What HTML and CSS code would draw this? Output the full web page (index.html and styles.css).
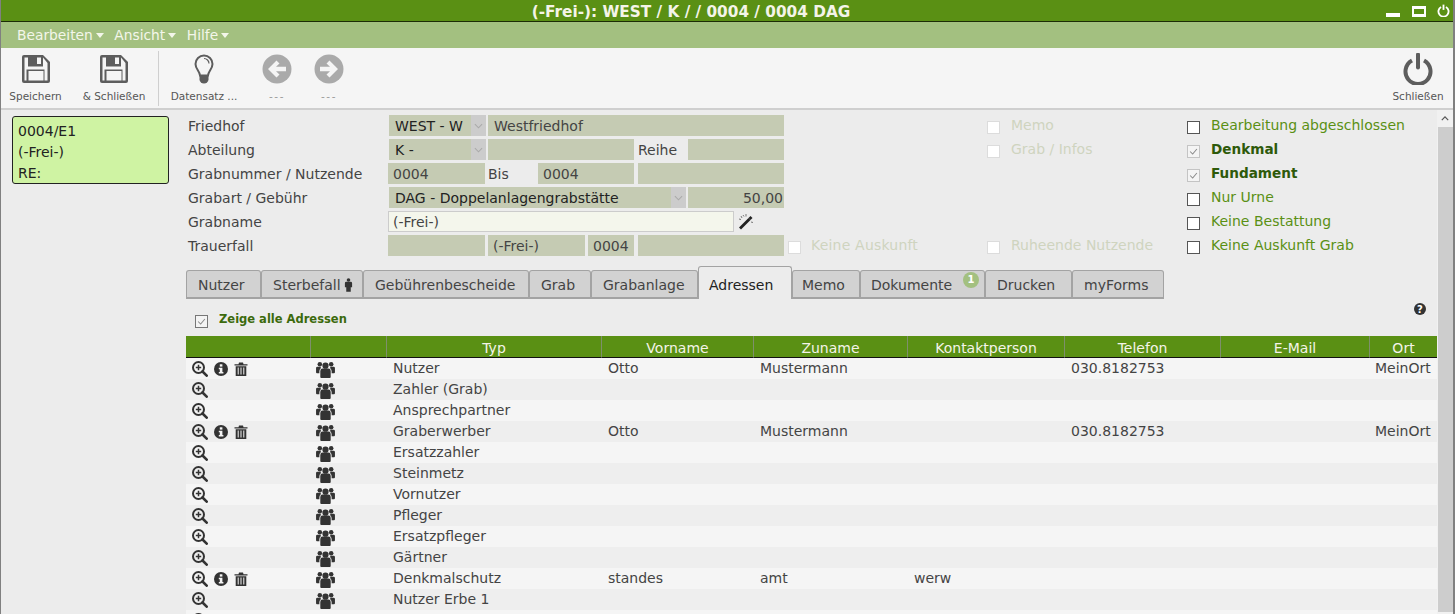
FILE: index.html
```html
<!DOCTYPE html>
<html lang="de">
<head>
<meta charset="utf-8">
<title>Grab</title>
<link rel="stylesheet" href="styles.css">
</head>
<body>
<svg class="defs" width="0" height="0">
  <symbol id="i-save" viewBox="0 0 30 30">
    <path d="M1 3a2 2 0 0 1 2-2h19l7 7v19a2 2 0 0 1-2 2H3a2 2 0 0 1-2-2z" fill="#5d5d5d"/>
    <path d="M3.500 3.500h3.500v9h15v-9l4.500 5.500v17.500h-3v-11h-18v11h-2z" fill="#f5f5f5"/>
    <rect x="7.500" y="17" width="15" height="9.500" fill="#f5f5f5" />
    <rect x="16" y="3.500" width="4" height="6.500" fill="#f5f5f5"/>
  </symbol>
  <symbol id="i-bulb" viewBox="0 0 20 30">
    <path d="M10 1.500a8.500 8.500 0 0 0-8.500 8.500c0 5 4 6.500 4.500 11.500h8c.5-5 4.500-6.500 4.500-11.500A8.500 8.500 0 0 0 10 1.500z" fill="#f5f5f5" stroke="#5d5d5d" stroke-width="2"/>
    <path d="M5.500 21h9v4.500a4.500 4 0 0 1-9 0z" fill="#5d5d5d"/>
    <path d="M10 4.500a5 5 0 0 1 5 5" fill="none" stroke="#5d5d5d" stroke-width="1.200"/>
  </symbol>
  <symbol id="i-left" viewBox="0 0 30 30">
    <circle cx="15" cy="15" r="14.500" fill="#aaa"/>
    <path d="M6 15l8.500-8.500 3 3-3.500 3.200h10v4.600H14l3.500 3.200-3 3z" fill="#f5f5f5"/>
  </symbol>
  <symbol id="i-right" viewBox="0 0 30 30">
    <circle cx="15" cy="15" r="14.500" fill="#aaa"/>
    <path d="M24 15l-8.500-8.500-3 3 3.500 3.200H6v4.600h10l-3.500 3.200 3 3z" fill="#f5f5f5"/>
  </symbol>
  <symbol id="i-power" viewBox="0 0 30 32">
    <path d="M9 7.500a12.500 12.500 0 1 0 12 0" fill="none" stroke="#5d5d5d" stroke-width="4"/>
    <path d="M15 1.500v13" stroke="#5d5d5d" stroke-width="4" stroke-linecap="round"/>
  </symbol>
  <symbol id="i-zoom" viewBox="0 0 16 16">
    <circle cx="6.500" cy="6.500" r="5.500" fill="none" stroke="#333" stroke-width="2"/>
    <path d="M10.500 10.500l4.200 4.200" stroke="#333" stroke-width="2.600" stroke-linecap="round"/>
    <path d="M6.500 3.800v5.400M3.800 6.500h5.400" stroke="#333" stroke-width="1.500"/>
  </symbol>
  <symbol id="i-info" viewBox="0 0 14 14">
    <circle cx="7" cy="7" r="7" fill="#333"/>
    <rect x="5.800" y="2.300" width="2.600" height="2.300" fill="#f5f5f5"/>
    <path d="M4.800 5.700h3.600v4.400h1v1.500H4.800v-1.500h1V7.200h-1z" fill="#f5f5f5"/>
  </symbol>
  <symbol id="i-trash" viewBox="0 0 14 14">
    <path d="M0.500 2.200h4L5 .5h4l.5 1.700h4v1.400H.5z" fill="#333"/>
    <path d="M1.700 4.300h10.600V14H1.700zM4 5.500v7M7 5.500v7M10 5.500v7" fill="#333"/>
    <path d="M4.200 5.500v7M7 5.500v7M9.800 5.500v7" stroke="#f5f5f5" stroke-width="1"/>
  </symbol>
  <symbol id="i-users" viewBox="0 0 20 18">
    <circle cx="10" cy="5" r="3.300" fill="#333"/>
    <circle cx="4" cy="3.500" r="2.400" fill="#333"/>
    <circle cx="16" cy="3.500" r="2.400" fill="#333"/>
    <path d="M4.500 10.500a2.500 2.500 0 0 1 2.500-2.500h6a2.500 2.500 0 0 1 2.500 2.500V17a1 1 0 0 1-1 1h-9a1 1 0 0 1-1-1z" fill="#333"/>
    <path d="M0 7.500a1.500 1.500 0 0 1 1.500-1.500h3.500v1.800a4 4 0 0 0-1.500 2.700V13H1a1 1 0 0 1-1-1zM20 7.500a1.500 1.500 0 0 0-1.500-1.500H15v1.800a4 4 0 0 1 1.500 2.700V13H19a1 1 0 0 0 1-1z" fill="#333"/>
  </symbol>
  <symbol id="i-chev" viewBox="0 0 10 6">
    <path d="M1 1l4 4 4-4" fill="none" stroke="#aaa" stroke-width="1.200"/>
  </symbol>
  <symbol id="i-check" viewBox="0 0 13 13">
    <path d="M2.500 6.500l3 3 5-6" fill="none" stroke="#8a8a8a" stroke-width="1.200"/>
  </symbol>
</svg>

<div class="window">
  <header class="titlebar">
    <span class="title">(-Frei-): WEST / K / / 0004 / 0004 DAG</span>
    <div class="winctl">
      <span class="win-min"></span>
      <span class="win-max"></span>
      <svg class="win-close" viewBox="0 0 30 32"><path d="M9 7.500a12.500 12.500 0 1 0 12 0" fill="none" stroke="#fff" stroke-width="4.500"/><path d="M15 1.500v13" stroke="#fff" stroke-width="4.500"/></svg>
    </div>
  </header>
  <nav class="menubar">
    <span class="menu">Bearbeiten<i class="caret"></i></span>
    <span class="menu">Ansicht<i class="caret"></i></span>
    <span class="menu">Hilfe<i class="caret"></i></span>
  </nav>
  <div class="toolbar">
    <div class="tool t-a"><svg class="ti"><use href="#i-save"/></svg><span>Speichern</span></div>
    <div class="tool t-b"><svg class="ti"><use href="#i-save"/></svg><span>&amp; Schließen</span></div>
    <div class="tsep"></div>
    <div class="tool t-c"><svg class="ti ti-b"><use href="#i-bulb"/></svg><span>Datensatz ...</span></div>
    <div class="tool t-d"><svg class="ti"><use href="#i-left"/></svg><span class="dim">---</span></div>
    <div class="tool t-d"><svg class="ti"><use href="#i-right"/></svg><span class="dim">---</span></div>
    <div class="tool t-e"><svg class="ti"><use href="#i-power"/></svg><span>Schließen</span></div>
  </div>

  <div class="body">
    <main class="content">
      <aside class="side">
        <div class="card">
          <div>0004/E1</div>
          <div>(-Frei-)</div>
          <div>RE:</div>
        </div>
      </aside>
      <div class="detail">
        <section class="form">
          <div class="col-main">
            <div class="row">
              <label class="lbl">Friedhof</label>
              <div class="f sel w-sel-a">WEST - W<span class="sbtn"><svg class="chev"><use href="#i-chev"/></svg></span></div>
              <div class="f w-296">Westfriedhof</div>
            </div>
            <div class="row">
              <label class="lbl">Abteilung</label>
              <div class="f sel w-sel-a">K -<span class="sbtn"><svg class="chev"><use href="#i-chev"/></svg></span></div>
              <div class="f w-146"></div>
              <label class="lbl-in w-54">Reihe</label>
              <div class="f w-96"></div>
            </div>
            <div class="row">
              <label class="lbl lbl-s">Grabnummer / Nutzende</label>
              <div class="f w-97">0004</div>
              <label class="lbl-in g3">Bis</label>
              <div class="f w-96">0004</div>
              <div class="f w-146 g4"></div>
            </div>
            <div class="row">
              <label class="lbl">Grabart / Gebühr</label>
              <div class="f sel w-sel-b">DAG - Doppelanlagengrabstätte<span class="sbtn"><svg class="chev"><use href="#i-chev"/></svg></span></div>
              <div class="f w-96 num">50,00</div>
            </div>
            <div class="row">
              <label class="lbl lbl-s">Grabname</label>
              <div class="f edit">(-Frei-)</div>
              <svg class="wand" viewBox="0 0 16 16">
                <path d="M1 13.500l9.500-9.500 2 2L3 15.500z" fill="#222"/>
                <path d="M10.500 4l2-2 2 2-2 2z" fill="#222"/>
                <path d="M3 2l1 2M8 0v2.500M5 1l1 1.500M13 8l2 .5M1 5l2 .5" stroke="#777" stroke-width="1"/>
              </svg>
            </div>
            <div class="row">
              <label class="lbl lbl-s">Trauerfall</label>
              <div class="f w-97"></div>
              <div class="f w-97 g3">(-Frei-)</div>
              <div class="f w-46 g3">0004</div>
              <div class="f w-146 g4"></div>
              <span class="cb cb-off cb-inl"></span>
              <span class="off off-a">Keine Auskunft</span>
            </div>
          </div>
          <div class="col-mid">
            <div class="opt"><span class="cb cb-off"></span><span class="off">Memo</span></div>
            <div class="opt"><span class="cb cb-off"></span><span class="off">Grab / Infos</span></div>
            <div class="opt"></div>
            <div class="opt"></div>
            <div class="opt"></div>
            <div class="opt"><span class="cb cb-off"></span><span class="off">Ruheende Nutzende</span></div>
          </div>
          <div class="col-right">
            <div class="opt"><span class="cb"></span><span class="gr">Bearbeitung abgeschlossen</span></div>
            <div class="opt"><span class="cb cb-dis"><svg class="ck"><use href="#i-check"/></svg></span><span class="grb">Denkmal</span></div>
            <div class="opt"><span class="cb cb-dis"><svg class="ck"><use href="#i-check"/></svg></span><span class="grb">Fundament</span></div>
            <div class="opt"><span class="cb"></span><span class="gr">Nur Urne</span></div>
            <div class="opt"><span class="cb"></span><span class="gr">Keine Bestattung</span></div>
            <div class="opt"><span class="cb"></span><span class="gr">Keine Auskunft Grab</span></div>
          </div>
        </section>

        <div class="tabs">
          <span class="tab tw-1">Nutzer</span>
          <span class="tab tw-2">Sterbefall<svg class="person" viewBox="0 0 10 15"><circle cx="5" cy="2" r="2" fill="#333"/><path d="M1 5.500a1.500 1.500 0 0 1 1.500-1.500h5A1.500 1.500 0 0 1 9 5.500V10H7.500v5h-5v-5H1z" fill="#333"/></svg></span>
          <span class="tab tw-3">Gebührenbescheide</span>
          <span class="tab tw-4">Grab</span>
          <span class="tab tw-5">Grabanlage</span>
          <span class="tab tab-on tw-6">Adressen</span>
          <span class="tab tw-7">Memo</span>
          <span class="tab tw-8">Dokumente<b class="badge">1</b></span>
          <span class="tab tw-9">Drucken</span>
          <span class="tab tw-10">myForms</span>
        </div>

        <div class="listbar">
          <span class="cb cb-list"><svg class="ck"><use href="#i-check"/></svg></span>
          <span class="showall">Zeige alle Adressen</span>
          <svg class="help" viewBox="0 0 12 12"><circle cx="6" cy="6" r="6" fill="#333"/><text x="6" y="9.500" text-anchor="middle" class="helpq">?</text></svg>
        </div>

        <table class="grid">
          <colgroup>
            <col class="c1"><col class="c2"><col class="c3"><col class="c4"><col class="c5"><col class="c6"><col class="c7"><col class="c8"><col class="c9">
          </colgroup>
          <thead>
            <tr><th></th><th></th><th>Typ</th><th>Vorname</th><th>Zuname</th><th>Kontaktperson</th><th>Telefon</th><th>E-Mail</th><th>Ort</th></tr>
          </thead>
          <tbody>
            <tr><td class="acts"><svg class="a-z"><use href="#i-zoom"/></svg><svg class="a-i"><use href="#i-info"/></svg><svg class="a-t"><use href="#i-trash"/></svg></td><td class="ppl"><svg class="a-u"><use href="#i-users"/></svg></td><td>Nutzer</td><td>Otto</td><td>Mustermann</td><td></td><td>030.8182753</td><td></td><td class="ort">MeinOrt</td></tr>
            <tr><td class="acts"><svg class="a-z"><use href="#i-zoom"/></svg></td><td class="ppl"><svg class="a-u"><use href="#i-users"/></svg></td><td>Zahler (Grab)</td><td></td><td></td><td></td><td></td><td></td><td></td></tr>
            <tr><td class="acts"><svg class="a-z"><use href="#i-zoom"/></svg></td><td class="ppl"><svg class="a-u"><use href="#i-users"/></svg></td><td>Ansprechpartner</td><td></td><td></td><td></td><td></td><td></td><td></td></tr>
            <tr><td class="acts"><svg class="a-z"><use href="#i-zoom"/></svg><svg class="a-i"><use href="#i-info"/></svg><svg class="a-t"><use href="#i-trash"/></svg></td><td class="ppl"><svg class="a-u"><use href="#i-users"/></svg></td><td>Graberwerber</td><td>Otto</td><td>Mustermann</td><td></td><td>030.8182753</td><td></td><td class="ort">MeinOrt</td></tr>
            <tr><td class="acts"><svg class="a-z"><use href="#i-zoom"/></svg></td><td class="ppl"><svg class="a-u"><use href="#i-users"/></svg></td><td>Ersatzzahler</td><td></td><td></td><td></td><td></td><td></td><td></td></tr>
            <tr><td class="acts"><svg class="a-z"><use href="#i-zoom"/></svg></td><td class="ppl"><svg class="a-u"><use href="#i-users"/></svg></td><td>Steinmetz</td><td></td><td></td><td></td><td></td><td></td><td></td></tr>
            <tr><td class="acts"><svg class="a-z"><use href="#i-zoom"/></svg></td><td class="ppl"><svg class="a-u"><use href="#i-users"/></svg></td><td>Vornutzer</td><td></td><td></td><td></td><td></td><td></td><td></td></tr>
            <tr><td class="acts"><svg class="a-z"><use href="#i-zoom"/></svg></td><td class="ppl"><svg class="a-u"><use href="#i-users"/></svg></td><td>Pfleger</td><td></td><td></td><td></td><td></td><td></td><td></td></tr>
            <tr><td class="acts"><svg class="a-z"><use href="#i-zoom"/></svg></td><td class="ppl"><svg class="a-u"><use href="#i-users"/></svg></td><td>Ersatzpfleger</td><td></td><td></td><td></td><td></td><td></td><td></td></tr>
            <tr><td class="acts"><svg class="a-z"><use href="#i-zoom"/></svg></td><td class="ppl"><svg class="a-u"><use href="#i-users"/></svg></td><td>Gärtner</td><td></td><td></td><td></td><td></td><td></td><td></td></tr>
            <tr><td class="acts"><svg class="a-z"><use href="#i-zoom"/></svg><svg class="a-i"><use href="#i-info"/></svg><svg class="a-t"><use href="#i-trash"/></svg></td><td class="ppl"><svg class="a-u"><use href="#i-users"/></svg></td><td>Denkmalschutz</td><td>standes</td><td>amt</td><td>werw</td><td></td><td></td><td></td></tr>
            <tr><td class="acts"><svg class="a-z"><use href="#i-zoom"/></svg></td><td class="ppl"><svg class="a-u"><use href="#i-users"/></svg></td><td>Nutzer Erbe 1</td><td></td><td></td><td></td><td></td><td></td><td></td></tr>
            <tr><td class="acts"><svg class="a-z"><use href="#i-zoom"/></svg></td><td class="ppl"><svg class="a-u"><use href="#i-users"/></svg></td><td></td><td></td><td></td><td></td><td></td><td></td><td></td></tr>
          </tbody>
        </table>
      </div>
    </main>
    <div class="scrollbar">
      <span class="sb-up"><svg class="sb-arrow" viewBox="0 0 10 6"><path d="M1 5l4-4 4 4" fill="none" stroke="#555" stroke-width="1.500"/></svg></span>
      <span class="sb-thumb"></span>
    </div>
  </div>
</div>
</body>
</html>
```
FILE: styles.css
```css
* { box-sizing: border-box; }
html, body { margin: 0; height: 100%; overflow: hidden; }
body {
  font-family: "DejaVu Sans", Verdana, sans-serif;
  font-size: 14px;
  color: #444;
  background: #ececec;
}
.defs { display: block; height: 0; }
.window {
  height: 614px;
  display: flex;
  flex-direction: column;
  border-left: 1px solid #808080;
  border-right: 2px solid #808080;
  overflow: hidden;
}

.titlebar {
  height: 22px;
  flex: none;
  background: #5a9014;
  border-bottom: 1px solid #1c2c06;
  display: flex;
  align-items: center;
  justify-content: center;
  position: relative;
}
.title { color: #f4f4e8; font-weight: 700; font-size: 15.300px; padding: 2px 72px 0 0; }
.winctl {
  position: absolute;
  right: 0;
  top: 0;
  height: 21px;
  display: flex;
}
.win-min { position: absolute; right: 53px; top: 13px; width: 14px; height: 4px; background: #fff; }
.win-max { position: absolute; right: 27px; top: 6px; width: 14px; height: 11px; border: 2px solid #fff; border-top-width: 3px; border-bottom-width: 3px; }
.win-close { position: absolute; right: 3px; top: 4px; width: 13px; height: 13px; }

.menubar {
  height: 26px;
  flex: none;
  background: #a3c080;
  display: flex;
  align-items: center;
  padding-left: 16px;
  gap: 10.500px;
}
.menu { color: #f3f6ea; font-size: 13.800px; display: flex; align-items: center; }
.caret {
  width: 0;
  height: 0;
  margin-left: 3px;
  border-left: 4.500px solid transparent;
  border-right: 4.500px solid transparent;
  border-top: 5px solid #f3f6ea;
}

.toolbar {
  height: 62px;
  flex: none;
  background: #f5f5f5;
  border-bottom: 2px solid #cfcfcf;
  display: flex;
}
.tool {
  display: flex;
  flex-direction: column;
  align-items: center;
  padding-top: 5px;
  font-size: 10.500px;
  color: #555;
  white-space: nowrap;
}
.ti { width: 30px; height: 32px; margin-bottom: 5px; display: block; }
.ti-b { width: 20px; height: 30px; margin: 1px 0 6px; }
.tool span { line-height: 12px; }
.tool .dim { color: #999; letter-spacing: 1.500px; }
.t-a { width: 69px; }
.t-b { width: 70px; margin-left: 9px; }
.tsep { width: 1px; height: 55px; margin: 3px 0 0 9px; background: #cfcfcf; }
.t-c { width: 70px; margin-left: 10px; }
.t-d { width: 52px; }
.t-c + .t-d { margin-left: 12px; }
.t-e { width: 70px; margin-left: auto; }

.body { flex: 1; display: flex; min-height: 0; }
.content { flex: 1; display: flex; min-width: 0; overflow: hidden; }
.side { width: 185px; flex: none; padding: 6px 0 0 11px; }
.card {
  width: 157px;
  height: 68px;
  background: #cff3a3;
  border: 1px solid #222;
  border-radius: 3px;
  padding: 4px 5px 0;
  color: #222;
  line-height: 21px;
}
.detail { flex: 1; min-width: 0; }

.form { display: flex; padding: 5px 0 0 2px; height: 156px; }
.col-main { width: 799px; flex: none; }
.col-mid { width: 200px; flex: none; }
.col-right { flex: 1; }
.row { height: 24px; display: flex; align-items: flex-start; }
.lbl { width: 201px; flex: none; line-height: 23px; color: #444; }
.lbl-s { width: 200px; }
.lbl-in { flex: none; padding-left: 4px; line-height: 23px; }
.w-54 { width: 54px; }
.f {
  height: 21px;
  line-height: 22px;
  background: #c5cbb3;
  padding: 0 5px;
  color: #444;
  flex: none;
  position: relative;
  white-space: nowrap;
  overflow: hidden;
}
.sel { color: #222; margin-right: 2px; padding-left: 6px; }
.sbtn {
  position: absolute;
  right: 0;
  top: 0;
  bottom: 0;
  width: 15px;
  background: #ccc;
  display: flex;
  align-items: center;
  justify-content: center;
}
.chev { width: 9px; height: 6px; }
.w-sel-a { width: 97px; }
.w-sel-b { width: 297px; }
.w-296 { width: 296px; padding-left: 6px; }
.w-146 { width: 146px; }
.w-96 { width: 96px; }
.w-97 { width: 97px; }
.w-46 { width: 46px; }
.g3 { margin-left: 3px; }
.g4 { margin-left: 4px; }
.lbl-in.g3 { margin-left: 0; padding-left: 3px; width: 53px; }
.num { text-align: right; padding-right: 1px; }
.edit { width: 346px; background: #f4f6ec; border: 1px solid #ccc; line-height: 20px; padding: 0 4px; }
.wand { width: 16px; height: 16px; margin: 3px 0 0 4px; flex: none; }

.opt { height: 24px; display: flex; align-items: flex-start; }
.cb {
  width: 13px;
  height: 13px;
  flex: none;
  background: #fff;
  border: 1px solid #555;
  margin: 6px 11px 0 0;
  display: block;
}
.cb-off { border-color: #dcdcdc; }
.cb-dis { border-color: #c4c4c4; background: #f4f4f4; }
.cb-inl { margin: 6px 10px 0 4px; }
.ck { display: block; width: 11px; height: 11px; }
.off { color: #cfd4bf; line-height: 21px; }
.off-a { line-height: 20px; letter-spacing: .2px; }
.gr { color: #5a9014; line-height: 21px; }
.grb { color: #2e5a0a; font-weight: 700; line-height: 21px; font-size: 13.600px; }

.tabs { display: flex; height: 33px; align-items: flex-end; }
.tab {
  height: 29px;
  background: #d2d2d2;
  border: 1px solid #a3a3a3;
  border-bottom-width: 2px;
  border-radius: 3px 3px 0 0;
  padding: 6px 0 0 11px;
  color: #444;
  display: block;
  position: relative;
  flex: none;
  white-space: nowrap;
}
.tab-on {
  height: 33px;
  background: #ececec;
  border-bottom: 0;
  color: #222;
  padding: 10px 0 0 10px;
}
.tw-1 { width: 75px; }
.tw-2 { width: 102px; }
.tw-3 { width: 166px; }
.tw-4 { width: 62px; }
.tw-5 { width: 107px; }
.tw-6 { width: 94px; }
.tw-7 { width: 68px; padding-left: 9px; }
.tw-8 { width: 125px; padding-left: 10px; }
.tw-9 { width: 87px; }
.tw-10 { width: 92px; }
.person { width: 9px; height: 14px; margin-left: 3px; vertical-align: -2px; }
.badge {
  position: absolute;
  right: 5px;
  top: 1px;
  width: 16px;
  height: 16px;
  border-radius: 50%;
  background: #a3c080;
  color: #fff;
  font-size: 10px;
  line-height: 15px;
  text-align: center;
}

.listbar { height: 37px; position: relative; display: flex; align-items: flex-start; padding-left: 9px; }
.cb-list { margin: 16px 11px 0 0; border-color: #777; background: #f4f4f4; }
.showall { color: #3c6a0c; font-weight: 700; font-size: 11.500px; line-height: 14px; margin-top: 13px; }
.help { position: absolute; right: 11px; top: 4px; width: 12px; height: 12px; }
.helpq { fill: #fff; font-size: 10px; font-weight: 700; font-family: "DejaVu Sans", sans-serif; }

.grid {
  width: 1251px;
  border-collapse: separate;
  border-spacing: 0;
  table-layout: fixed;
}
.c1 { width: 125px; }
.c2 { width: 76px; }
.c3 { width: 215px; }
.c4 { width: 152px; }
.c5 { width: 154px; }
.c6 { width: 157px; }
.c7 { width: 156px; }
.c8 { width: 149px; }
.c9 { width: 67px; }
.grid th {
  height: 22px;
  padding: 3px 0 0;
  background: #5a9014;
  border-right: 1px solid #7e8f6c;
  border-bottom: 1px solid #111;
  color: #f4f4e8;
  font-weight: 400;
  font-size: 14px;
  line-height: 18px;
  text-align: center;
}
.grid th:last-child { border-right: 0; }
.grid td {
  height: 21px;
  padding: 0 0 1px 6px;
  line-height: 20px;
  white-space: nowrap;
  overflow: hidden;
  vertical-align: middle;
}
.grid tbody tr:nth-child(odd) td { background: #f5f5f5; }
.grid tbody tr:nth-child(even) td { background: #eee; }
.grid td.ort { padding-left: 5px; }
.grid td.acts { padding: 0 0 1px 6px; }
.grid td.ppl { padding: 0 0 1px 5px; }
.grid svg { display: inline-block; vertical-align: middle; }
.a-z { width: 16px; height: 16px; }
.a-i { width: 14px; height: 14px; margin-left: 6px; }
.a-t { width: 14px; height: 14px; margin-left: 6px; }
.a-u { width: 19px; height: 17px; }

.scrollbar { width: 16px; flex: none; background: #f1f1f1; display: flex; flex-direction: column; }
.sb-up { height: 17px; display: flex; align-items: center; justify-content: center; }
.sb-arrow { width: 8px; height: 5px; }
.sb-thumb { width: 15px; margin-left: 1px; height: 485px; background: #cdcdcd; }
```
